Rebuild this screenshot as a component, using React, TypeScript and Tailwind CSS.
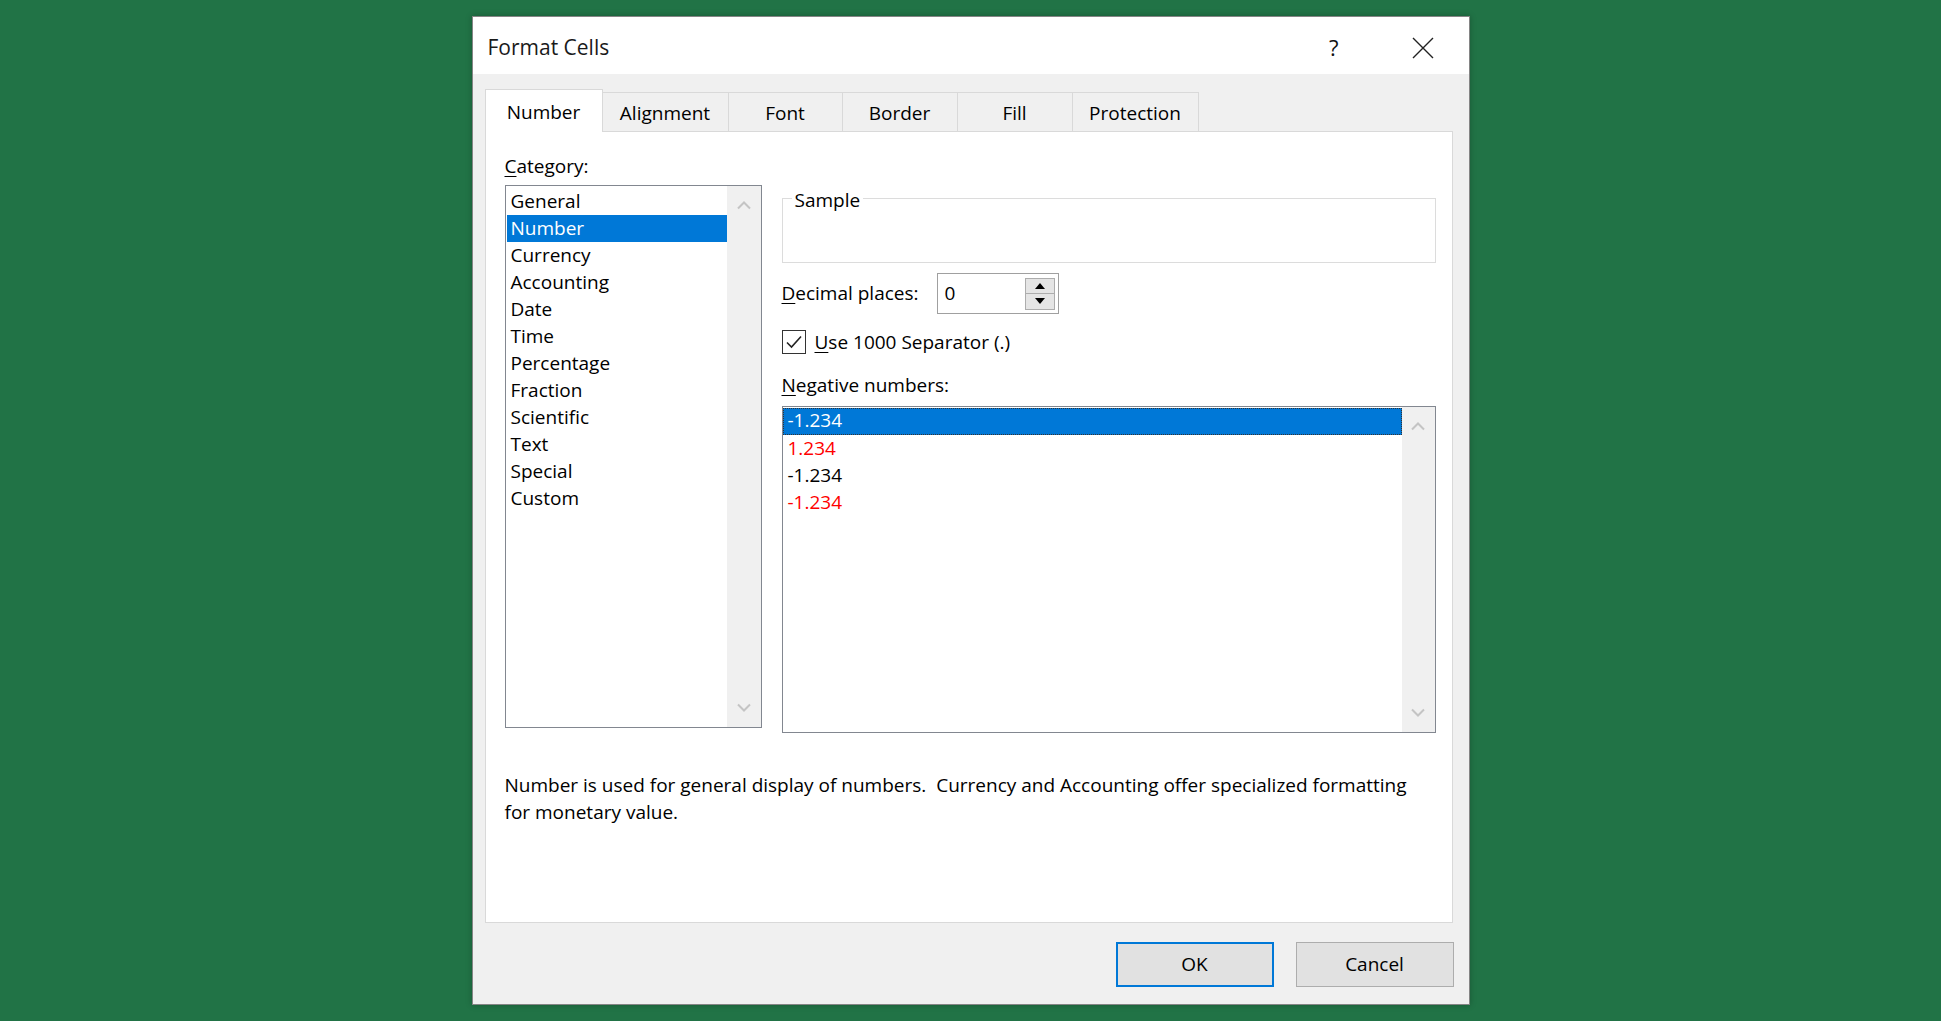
import React from 'react';

const categories = ['General', 'Number', 'Currency', 'Accounting', 'Date', 'Time', 'Percentage', 'Fraction', 'Scientific', 'Text', 'Special', 'Custom'];

const tabs = [
  { label: 'Number', w: 'w-[118px]' },
  { label: 'Alignment', w: 'w-[127px]' },
  { label: 'Font', w: 'w-[115px]' },
  { label: 'Border', w: 'w-[116px]' },
  { label: 'Fill', w: 'w-[116px]' },
  { label: 'Protection', w: 'w-[127px]' },
];

function Chevron({ up }: { up?: boolean }) {
  return (
    <svg width="16" height="10" viewBox="0 0 16 10" fill="none">
      <path d={up ? 'M2 8.5 L8 2.5 L14 8.5' : 'M2 1.5 L8 7.5 L14 1.5'} stroke="#c4c4c4" strokeWidth="2" />
    </svg>
  );
}

function ScrollTrack({ w }: { w: string }) {
  return (
    <div className={`${w} flex h-full flex-col items-center justify-between bg-[#f0f0f0] py-[14px]`}>
      <Chevron up />
      <Chevron />
    </div>
  );
}

export default function App() {
  return (
    <div className="flex h-screen w-full items-center justify-center bg-[#217346] font-['Open_Sans',sans-serif] text-[19px] text-black">
      <div className="w-[998px] border border-[#858585] bg-[#f0f0f0] shadow-[0_0_6px_rgba(0,0,0,0.25)]">
        {/* title bar */}
        <div className="flex h-[57px] items-center bg-white pl-[15px] pr-[35px] pt-[4px]">
          <span className="text-[21px] text-[#1a1a1a]">Format Cells</span>
          <span className="ml-auto mr-[73px] text-[22px] text-[#111]">?</span>
          <svg width="22" height="22" viewBox="0 0 22 22">
            <path d="M1 1 L21 21 M21 1 L1 21" stroke="#222" strokeWidth="1.4" />
          </svg>
        </div>

        <div className="px-[12px] pt-[15px]">
          {/* tabs */}
          <div className="flex h-[42px] items-end">
            {tabs.map((t, i) =>
              i === 0 ? (
                <div key={t.label} className={`${t.w} relative z-10 -mb-[1px] flex h-[43px] items-center justify-center border border-b-0 border-[#d9d9d9] bg-white pt-[2px]`}>
                  {t.label}
                </div>
              ) : (
                <div key={t.label} className={`${t.w} -ml-[1px] flex h-[39px] items-center justify-center border border-b-0 border-[#d9d9d9] bg-[#f0f0f0] pt-[2px]`}>
                  {t.label}
                </div>
              )
            )}
          </div>

          {/* panel */}
          <div className="h-[792px] w-[968px] border border-[#d9d9d9] bg-white pl-[19px] pt-[21px]">
            <div className="leading-[27px]">
              <span className="underline underline-offset-[3px]">C</span>ategory:
            </div>

            <div className="mt-[5px] flex gap-[20px]">
              {/* category list */}
              <div className="flex h-[543px] w-[257px] border border-[#828790]">
                <div className="flex-1 pl-[1px] pt-[2px]">
                  {categories.map((c) => (
                    <div
                      key={c}
                      className={`h-[27px] pl-[4px] leading-[27px] ${c === 'Number' ? 'bg-[#0078d7] text-white' : ''}`}
                    >
                      {c}
                    </div>
                  ))}
                </div>
                <ScrollTrack w="w-[34px]" />
              </div>

              {/* right column */}
              <div className="w-[654px]">
                <div className="relative mt-[13px] h-[65px] border border-[#dcdcdc]">
                  <span className="absolute -top-[12px] left-[9px] bg-white px-[3px] leading-[27px]">Sample</span>
                </div>

                <div className="mt-[10px] flex h-[41px] items-center">
                  <span className="w-[155px]">
                    <span className="underline underline-offset-[3px]">D</span>ecimal places:
                  </span>
                  <div className="flex h-[41px] w-[122px] items-center justify-between border border-[#a0a0a0] pl-[7px] pr-[3px]">
                    <span>0</span>
                    <div className="flex h-[32px] w-[30px] flex-col border border-[#adadad]">
                      <div className="flex flex-1 items-center justify-center border-b border-[#adadad] bg-[#e5e5e5]">
                        <svg width="10" height="6" viewBox="0 0 10 6"><path d="M0 6 L5 0 L10 6 Z" fill="#000" /></svg>
                      </div>
                      <div className="flex flex-1 items-center justify-center bg-[#e5e5e5]">
                        <svg width="10" height="6" viewBox="0 0 10 6"><path d="M0 0 L5 6 L10 0 Z" fill="#000" /></svg>
                      </div>
                    </div>
                  </div>
                </div>

                <div className="mt-[16px] flex h-[24px] items-center gap-[9px]">
                  <div className="flex h-[24px] w-[24px] items-center justify-center border border-[#333] bg-white">
                    <svg width="18" height="18" viewBox="0 0 18 18" fill="none">
                      <path d="M2 9.5 L6.5 14 L16 3.5" stroke="#222" strokeWidth="1.6" />
                    </svg>
                  </div>
                  <span>
                    <span className="underline underline-offset-[3px]">U</span>se 1000 Separator (.)
                  </span>
                </div>

                <div className="mt-[18px] leading-[27px]">
                  <span className="underline underline-offset-[3px]">N</span>egative numbers:
                </div>

                <div className="mt-[7px] flex h-[327px] w-[654px] border border-[#828790]">
                  <div className="flex-1 pt-[1px]">
                    <div className="h-[27px] bg-[#0078d7] pl-[5px] leading-[25px] text-white outline-1 -outline-offset-1 outline-dotted outline-[#333]">-1.234</div>
                    <div className="h-[27px] pl-[5px] leading-[27px] text-[#ff0000]">1.234</div>
                    <div className="h-[27px] pl-[5px] leading-[27px]">-1.234</div>
                    <div className="h-[27px] pl-[5px] leading-[27px] text-[#ff0000]">-1.234</div>
                  </div>
                  <ScrollTrack w="w-[33px]" />
                </div>
              </div>
            </div>

            <p className="mt-[39px] whitespace-pre leading-[27px]">
              {'Number is used for general display of numbers.  Currency and Accounting offer specialized formatting'}
              <br />
              {'for monetary value.'}
            </p>
          </div>

          {/* buttons */}
          <div className="flex justify-end gap-[22px] pb-[17px] pr-[3px] pt-[19px]">
            <button type="button" className="h-[45px] w-[158px] border-2 border-[#0078d7] bg-[#e1e1e1] text-[19px]">
              OK
            </button>
            <button type="button" className="h-[45px] w-[158px] border border-[#adadad] bg-[#e1e1e1] text-[19px]">
              Cancel
            </button>
          </div>
        </div>
      </div>
    </div>
  );
}
